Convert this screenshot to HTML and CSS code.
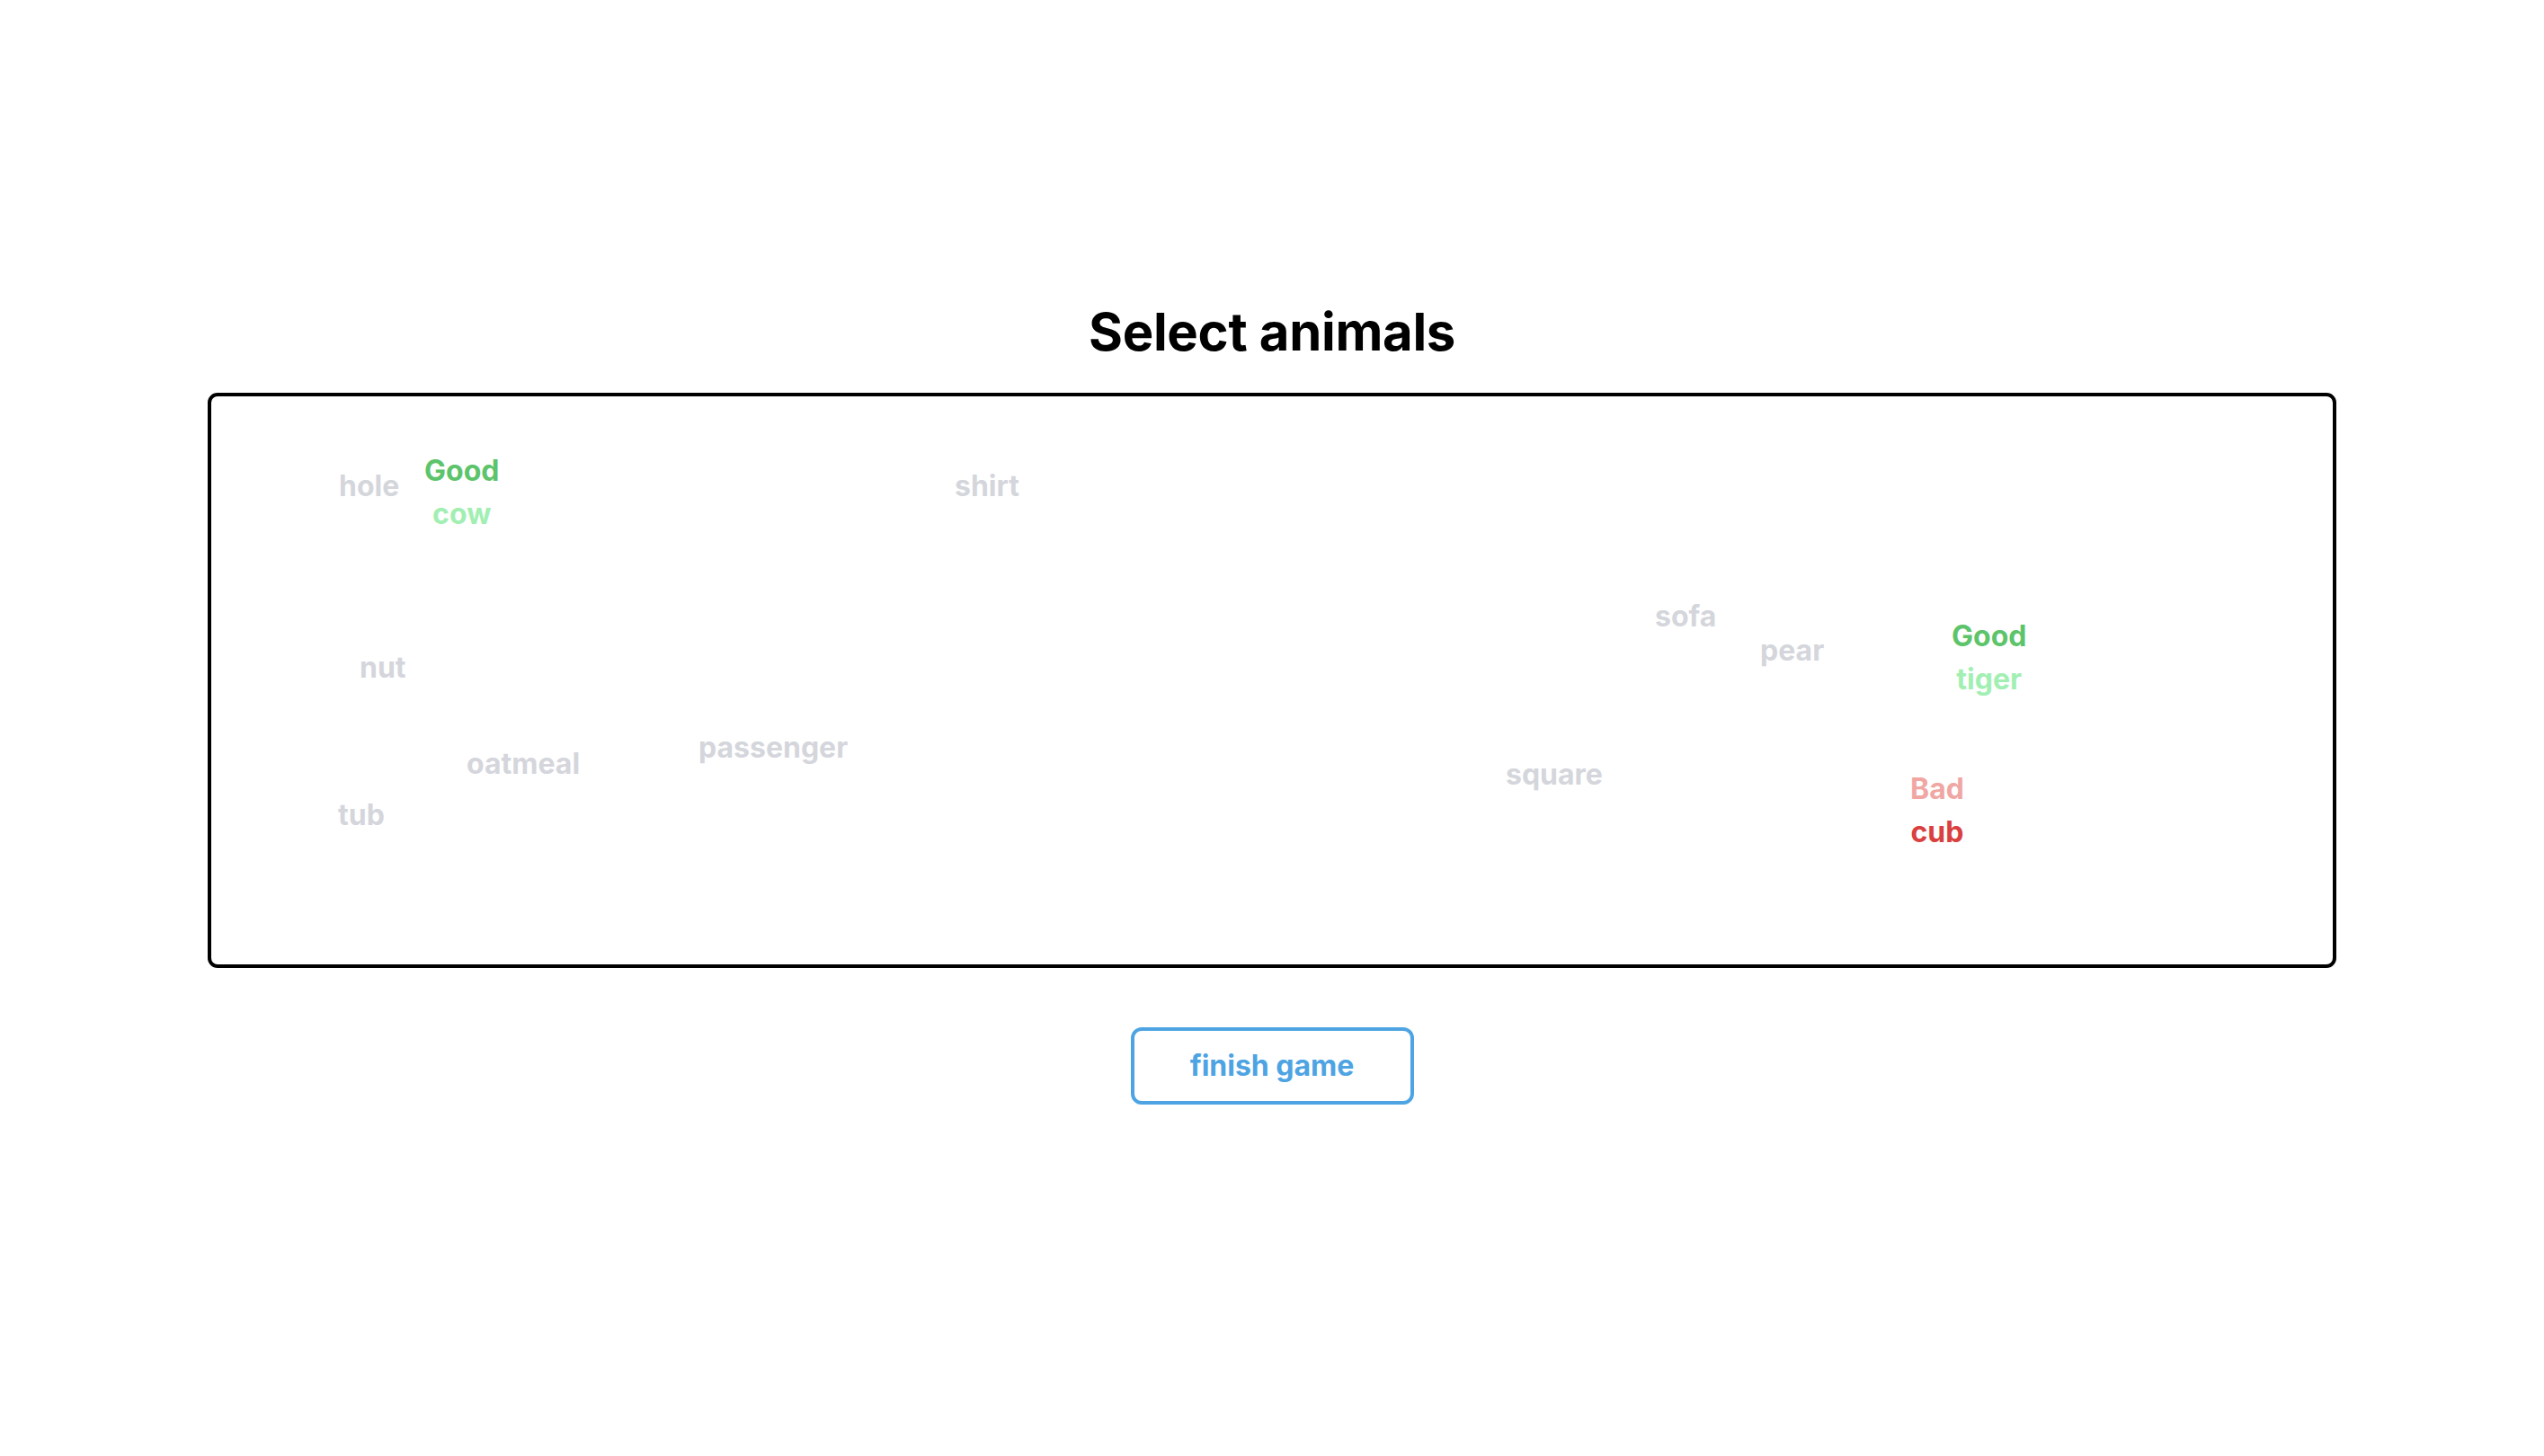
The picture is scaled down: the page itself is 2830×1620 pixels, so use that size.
FILE: index.html
```html
<!DOCTYPE html>
<html lang="en">
<head>
<meta charset="utf-8">
<title>Select animals</title>
<link rel="stylesheet" href="styles.css">
</head>
<body>
<main class="page">
  <h1 class="title">Select animals</h1>
  <div class="board">
    <span class="word" style="left:142px;top:80px">hole</span>
    <div class="pick good" style="left:237px;top:63px">
      <span class="verdict">Good</span>
      <span class="answer">cow</span>
    </div>
    <span class="word" style="left:827px;top:80px">shirt</span>
    <span class="word" style="left:165px;top:282px">nut</span>
    <span class="word" style="left:284px;top:389px">oatmeal</span>
    <span class="word" style="left:542px;top:371px">passenger</span>
    <span class="word" style="left:141px;top:446px">tub</span>
    <span class="word" style="left:1606px;top:225px">sofa</span>
    <span class="word" style="left:1723px;top:263px">pear</span>
    <div class="pick good" style="left:1936px;top:247px">
      <span class="verdict">Good</span>
      <span class="answer">tiger</span>
    </div>
    <span class="word" style="left:1440px;top:401px">square</span>
    <div class="pick bad" style="left:1890px;top:417px">
      <span class="verdict">Bad</span>
      <span class="answer">cub</span>
    </div>
  </div>
  <button class="finish" type="button">finish game</button>
</main>
</body>
</html>
```

FILE: styles.css
```css
html, body {
  margin: 0;
  padding: 0;
  background: #ffffff;
}

body {
  font-family: Inter, "Liberation Sans", sans-serif;
  color: #000;
}

.page {
  display: flex;
  flex-direction: column;
  align-items: center;
  padding-top: 333px;
}

.title {
  margin: 0;
  font-size: 58px;
  line-height: 72px;
  font-weight: 700;
  letter-spacing: -0.3px;
}

.board {
  position: relative;
  box-sizing: border-box;
  width: 2368px;
  height: 640px;
  margin-top: 32px;
  border: 4px solid #000;
  border-radius: 11px;
}

.word,
.pick {
  position: absolute;
  font-size: 32px;
  line-height: 40px;
  font-weight: 700;
  white-space: nowrap;
}

.word {
  color: #d4d6dc;
}

.pick {
  display: flex;
  flex-direction: column;
  align-items: center;
  gap: 8px;
}

.good .verdict { color: #5dc46b; }
.good .answer { color: #a2efb3; }
.bad .verdict { color: #f0a7a4; }
.bad .answer { color: #d9403f; }

.finish {
  box-sizing: border-box;
  width: 315px;
  height: 86px;
  margin-top: 66px;
  padding: 0;
  background: #fff;
  border: 4px solid #4ea4e3;
  border-radius: 12px;
  color: #4ea4e3;
  font-family: Inter, "Liberation Sans", sans-serif;
  font-size: 32px;
  line-height: 40px;
  font-weight: 700;
  cursor: pointer;
}
```
